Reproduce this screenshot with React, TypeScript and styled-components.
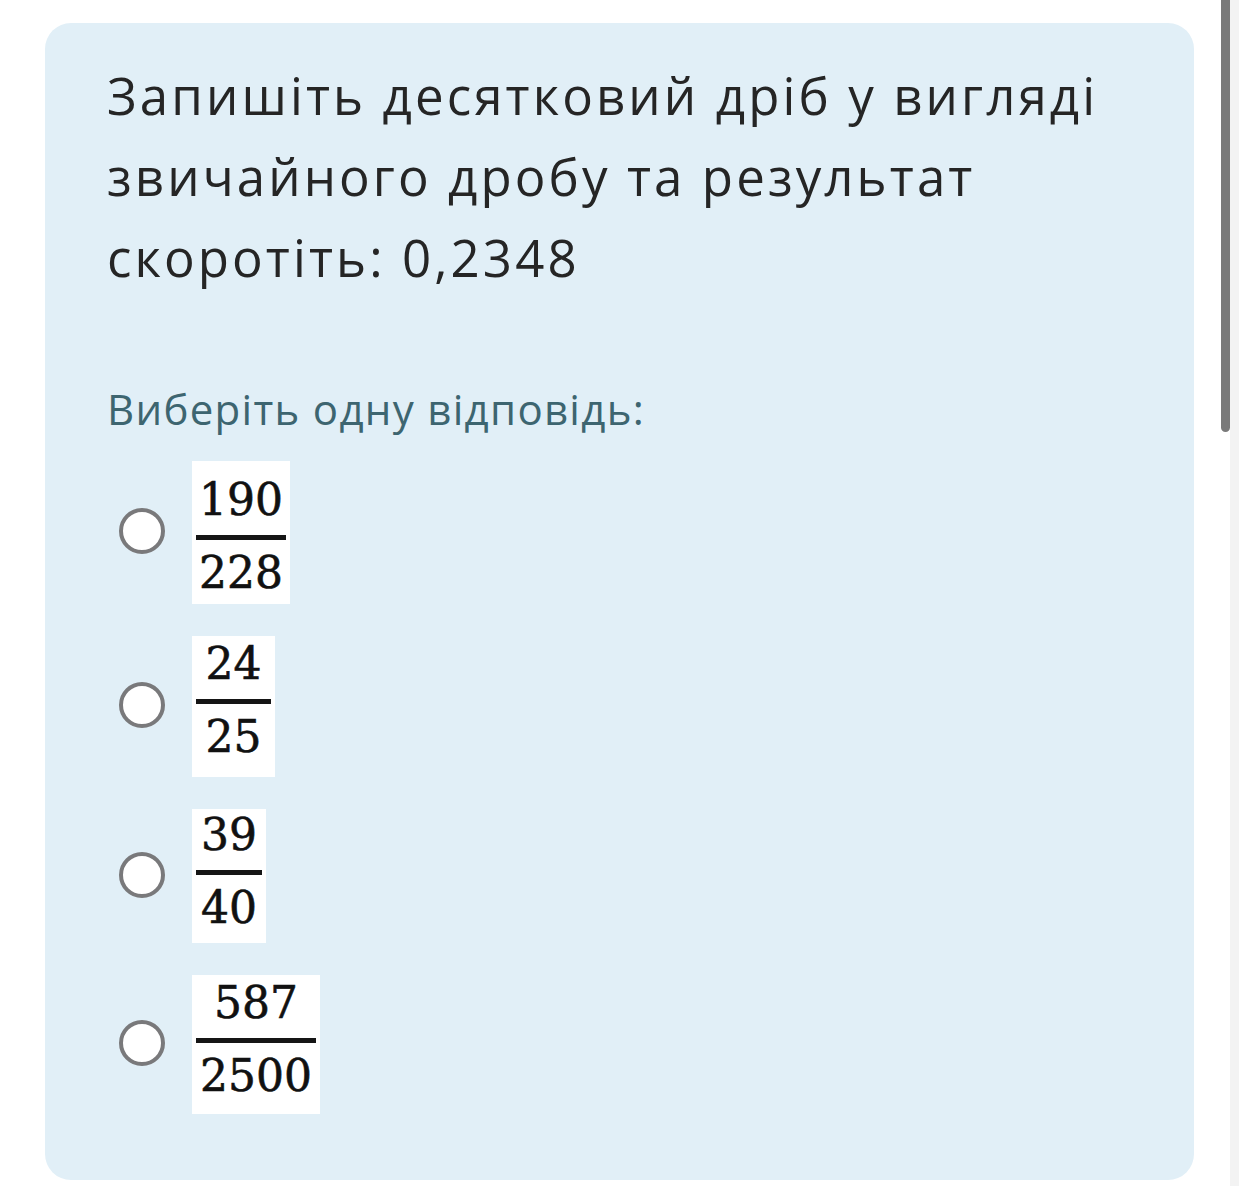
import React from "react";
import styled, { createGlobalStyle } from "styled-components";

const GlobalStyle = createGlobalStyle`
  html, body {
    margin: 0;
    padding: 0;
    background: #ffffff;
  }
  body {
    font-family: "Open Sans", "Noto Sans", sans-serif;
    overflow: hidden;
  }
`;

const Page = styled.div`
  padding: 23px 45px 6px 45px;
  width: 1149px;
`;

const Card = styled.section`
  background: #e1eff7;
  border-radius: 26px;
  height: 1157px;
  box-sizing: border-box;
  padding: 32px 62px 0 62px;
`;

const Question = styled.h1`
  margin: 0;
  font-family: "Open Sans", "Noto Sans", sans-serif;
  font-weight: 400;
  font-size: 51px;
  line-height: 81px;
  letter-spacing: 3.1px;
  color: #252525;
  max-width: 1025px;
`;

const Prompt = styled.p`
  margin: 83px 0 0 0;
  font-family: "Open Sans", "Noto Sans", sans-serif;
  font-weight: 400;
  font-size: 42px;
  line-height: 56px;
  letter-spacing: 1.3px;
  color: #3d6570;
`;

const Options = styled.div`
  display: flex;
  flex-direction: column;
  gap: 32px;
  margin-top: 24px;
`;

const Option = styled.label`
  display: flex;
  align-items: center;
  gap: 27px;
  padding-left: 12px;
`;

const Radio = styled.span`
  width: 46px;
  height: 46px;
  box-sizing: border-box;
  border-radius: 50%;
  border: 4px solid #79797b;
  background: #ffffff;
  flex: none;
  margin-top: -3px;
`;

const FractionBox = styled.span<{ $w: number; $h: number; $pt: number }>`
  display: inline-flex;
  flex-direction: column;
  align-items: center;
  justify-content: flex-start;
  box-sizing: border-box;
  background: #ffffff;
  width: ${(p) => p.$w}px;
  height: ${(p) => p.$h}px;
  padding-top: ${(p) => p.$pt}px;
  font-family: "DejaVu Serif", "Liberation Serif", serif;
  font-size: 44px;
  line-height: 44px;
  color: #111111;
  -webkit-text-stroke: 0.6px #111111;
`;

const Num = styled.span`
  display: block;
`;

const Bar = styled.span`
  display: block;
  align-self: stretch;
  height: 5px;
  background: #151515;
  margin: 13px 4px 11px 4px;
`;

const ScrollTrack = styled.div`
  position: fixed;
  top: 0;
  right: 0;
  width: 9px;
  height: 100%;
  background: #f3f3f3;
`;

const ScrollThumb = styled.div`
  position: fixed;
  top: 0;
  left: 1221px;
  width: 9px;
  height: 432px;
  background: #7a7a7a;
  border-radius: 0 0 5px 5px;
`;

const answers = [
  { n: "190", d: "228", w: 98, h: 143, pt: 17 },
  { n: "24", d: "25", w: 83, h: 141, pt: 6 },
  { n: "39", d: "40", w: 74, h: 134, pt: 4 },
  { n: "587", d: "2500", w: 128, h: 139, pt: 6 },
];

export default function App() {
  return (
    <>
      <GlobalStyle />
      <Page>
        <Card>
          <Question>
            Запишіть десятковий дріб у вигляді звичайного дробу та результат
            скоротіть: 0,2348
          </Question>
          <Prompt>Виберіть одну відповідь:</Prompt>
          <Options>
            {answers.map((a) => (
              <Option key={a.d}>
                <Radio />
                <FractionBox $w={a.w} $h={a.h} $pt={a.pt}>
                  <Num>{a.n}</Num>
                  <Bar />
                  <Num>{a.d}</Num>
                </FractionBox>
              </Option>
            ))}
          </Options>
        </Card>
      </Page>
      <ScrollTrack />
      <ScrollThumb />
    </>
  );
}
